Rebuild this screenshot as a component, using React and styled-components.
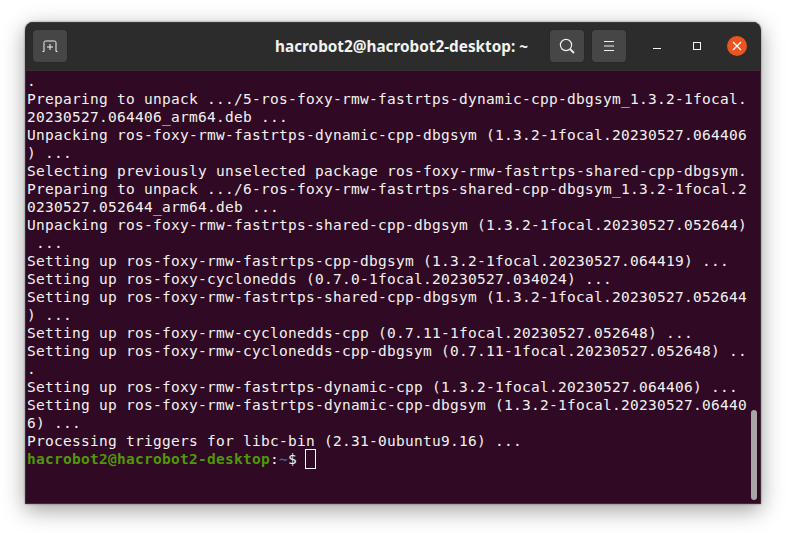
import React from 'react';
import styled, { createGlobalStyle } from 'styled-components';

const GlobalStyle = createGlobalStyle`
  html, body {
    margin: 0;
    padding: 0;
    background: #ffffff;
  }
`;

const LINES = [
  '.',
  'Preparing to unpack .../5-ros-foxy-rmw-fastrtps-dynamic-cpp-dbgsym_1.3.2-1focal.',
  '20230527.064406_arm64.deb ...',
  'Unpacking ros-foxy-rmw-fastrtps-dynamic-cpp-dbgsym (1.3.2-1focal.20230527.064406',
  ') ...',
  'Selecting previously unselected package ros-foxy-rmw-fastrtps-shared-cpp-dbgsym.',
  'Preparing to unpack .../6-ros-foxy-rmw-fastrtps-shared-cpp-dbgsym_1.3.2-1focal.2',
  '0230527.052644_arm64.deb ...',
  'Unpacking ros-foxy-rmw-fastrtps-shared-cpp-dbgsym (1.3.2-1focal.20230527.052644)',
  ' ...',
  'Setting up ros-foxy-rmw-fastrtps-cpp-dbgsym (1.3.2-1focal.20230527.064419) ...',
  'Setting up ros-foxy-cyclonedds (0.7.0-1focal.20230527.034024) ...',
  'Setting up ros-foxy-rmw-fastrtps-shared-cpp-dbgsym (1.3.2-1focal.20230527.052644',
  ') ...',
  'Setting up ros-foxy-rmw-cyclonedds-cpp (0.7.11-1focal.20230527.052648) ...',
  'Setting up ros-foxy-rmw-cyclonedds-cpp-dbgsym (0.7.11-1focal.20230527.052648) ..',
  '.',
  'Setting up ros-foxy-rmw-fastrtps-dynamic-cpp (1.3.2-1focal.20230527.064406) ...',
  'Setting up ros-foxy-rmw-fastrtps-dynamic-cpp-dbgsym (1.3.2-1focal.20230527.06440',
  '6) ...',
  'Processing triggers for libc-bin (2.31-0ubuntu9.16) ...',
];

const App = () => {
  return (
    <>
      <GlobalStyle />
      <Page>
        <Window>
          <TitleBar>
            <HeaderButton aria-label="New tab">
              <svg width="16" height="16" viewBox="0 0 16 16" fill="none" stroke="#f0f0f0" strokeWidth="1">
                <path d="M0.5 13.5h1.5V4.5a1.5 1.5 0 0 1 1.5-1.5h9a1.5 1.5 0 0 1 1.5 1.5v9h1.5" />
                <path d="M8 6v6M5 9h6" />
              </svg>
            </HeaderButton>
            <Title>hacrobot2@hacrobot2-desktop: ~</Title>
            <HeaderButton aria-label="Search">
              <svg width="16" height="16" viewBox="0 0 16 16" fill="none" stroke="#f0f0f0" strokeWidth="1.2">
                <circle cx="7" cy="7" r="5.6" />
                <path d="M11 11l4 4" strokeWidth="1.8" />
              </svg>
            </HeaderButton>
            <MenuButton aria-label="Menu">
              <svg width="16" height="16" viewBox="0 0 16 16" stroke="#f0f0f0" strokeWidth="1">
                <path d="M3 3.5h10M3 8h10M3 12.5h10" />
              </svg>
            </MenuButton>
            <WindowControls>
              <WindowControl aria-label="Minimize">
                <svg width="10" height="10" viewBox="0 0 10 10" stroke="#f5f5f5" strokeWidth="1.2">
                  <path d="M1 7.5h8" />
                </svg>
              </WindowControl>
              <WindowControl aria-label="Maximize">
                <svg width="10" height="10" viewBox="0 0 10 10" fill="none" stroke="#f5f5f5" strokeWidth="1">
                  <rect x="1.5" y="1.5" width="7" height="7" />
                </svg>
              </WindowControl>
              <CloseButton aria-label="Close">
                <svg width="10" height="10" viewBox="0 0 10 10" stroke="#ffffff" strokeWidth="1.3">
                  <path d="M1 1l8 8M9 1l-8 8" />
                </svg>
              </CloseButton>
            </WindowControls>
          </TitleBar>
          <Terminal>
            {LINES.map((line, i) => (
              <Line key={i}>{line}</Line>
            ))}
            <Line>
              <Host>hacrobot2@hacrobot2-desktop</Host>:<Path>~</Path>$ <Cursor />
            </Line>
            <Scrollbar />
          </Terminal>
        </Window>
      </Page>
    </>
  );
};

const Page = styled.div`
  width: 786px;
  height: 533px;
  box-sizing: border-box;
  padding: 22px 25px 29px;
  overflow: hidden;
`;

const Window = styled.div`
  width: 736px;
  height: 482px;
  display: flex;
  flex-direction: column;
  border-radius: 8px 8px 1px 1px;
  overflow: hidden;
  box-shadow: 0 6px 22px rgba(0, 0, 0, 0.38), 0 0 2px rgba(0, 0, 0, 0.5);
`;

const TitleBar = styled.div`
  height: 48px;
  flex: none;
  display: flex;
  align-items: center;
  padding-left: 8px;
  background: #2c2c2c;
  box-shadow: inset 0 1px 0 #3a3a3a;
`;

const HeaderButton = styled.div`
  width: 34px;
  height: 32px;
  display: flex;
  align-items: center;
  justify-content: center;
  border-radius: 4px;
  background: #464646;
  box-shadow: 0 0 0 1px #292929;
`;

const MenuButton = styled(HeaderButton)`
  margin-left: 8px;
`;

const Title = styled.div`
  flex: 1;
  padding-left: 186px;
  text-align: center;
  font-family: 'Noto Sans', sans-serif;
  font-weight: 700;
  font-size: 15.3px;
  color: #f2f2f2;
  white-space: nowrap;
`;

const WindowControls = styled.div`
  display: flex;
  align-items: center;
  margin-left: 21px;
  margin-right: 14px;
  gap: 20px;
`;

const WindowControl = styled.div`
  width: 20px;
  height: 20px;
  display: flex;
  align-items: center;
  justify-content: center;
`;

const CloseButton = styled(WindowControl)`
  border-radius: 50%;
  background: #e95420;
`;

const Terminal = styled.div`
  position: relative;
  flex: 1;
  padding: 2px 0 0 2px;
  background: #300a24;
  box-shadow: inset 0 0 0 1px #3d2a37;
  color: #f2f2f0;
  font-family: 'DejaVu Sans Mono', monospace;
  font-size: 14.5px;
  letter-spacing: 0.27px;
  line-height: 18px;
`;

const Line = styled.div`
  height: 18px;
  white-space: pre;
`;

const Host = styled.span`
  color: #4e9a06;
  font-weight: 700;
`;

const Path = styled.span`
  color: #3465a4;
  font-weight: 700;
`;

const Cursor = styled.span`
  display: inline-block;
  width: 9px;
  height: 18px;
  outline: 1px solid #ffffff;
  vertical-align: top;
`;

const Scrollbar = styled.div`
  position: absolute;
  top: 340px;
  right: 4px;
  width: 6px;
  height: 90px;
  border-radius: 3px;
  background: #a8a5a7;
`;

export default App;
